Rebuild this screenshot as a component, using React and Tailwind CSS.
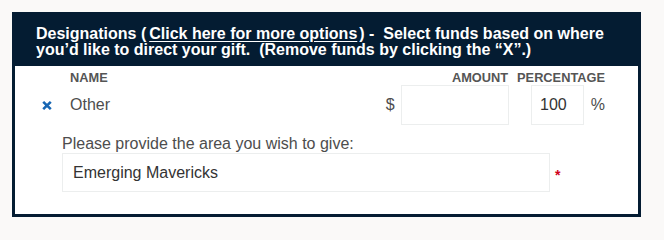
export default function App() {
  return (
    <div className="min-h-screen bg-[#faf9f8] pl-3 pt-3 font-['Liberation_Sans',Arial,sans-serif]">
      <div className="w-[629px] border-[3px] border-[#041c32] bg-white">
        {/* header bar */}
        <div className="bg-[#041c32] pb-[8px] pl-[21px] pt-[11px] text-[16px] font-bold leading-4 text-white">
          Designations (
          <a href="#" className="ml-[3px] mr-[2px] underline underline-offset-2">
            Click here for more options
          </a>
          ) -{"\u00a0"} Select funds based on where
          <br />
          you’d like to direct your gift.{"\u00a0"} (Remove funds by clicking the “X”.)
        </div>

        <div className="pb-[22px] pt-[5px]">
          {/* column labels */}
          <div className="flex items-center pl-[55px] pr-[33px] text-[12.8px] font-bold leading-[14px] text-[#555]">
            <div className="flex-1">NAME</div>
            <div className="w-[123px] pr-[2px] text-right">AMOUNT</div>
            <div className="ml-[7px]">PERCENTAGE</div>
          </div>

          {/* fund row */}
          <div className="flex h-[40px] items-center pl-[27px] pr-[33px] text-[16px] text-[#4d4d4d]">
            <div className="w-[28px]">
              <svg width="10" height="9" viewBox="0 0 10 9" className="block">
                <path d="M1.2 0.9 L8.8 8.1 M8.8 0.9 L1.2 8.1" stroke="#1766b3" strokeWidth="2.6" />
              </svg>
            </div>
            <div className="flex-1">Other</div>
            <div className="w-[15px]">$</div>
            <input
              className="h-[40px] w-[108px] border border-[#eceeee] px-2 outline-none"
              defaultValue=""
            />
            <input
              className="ml-[22px] h-[40px] w-[53px] border border-[#eceeee] pr-[16px] text-right text-[#333] outline-none"
              defaultValue="100"
            />
            <span className="ml-[7px]">%</span>
          </div>

          {/* other area */}
          <div className="mt-[10px] pl-[47px] text-[16px] leading-[18px] text-[#4d4d4d]">
            Please provide the area you wish to give:
          </div>
          <div className="flex items-center pl-[47px]">
            <input
              className="h-[39px] w-[488px] border border-[#eceeee] px-[10px] text-[16px] text-[#333] outline-none"
              defaultValue="Emerging Mavericks"
            />
            <span className="ml-[5px] mt-[4px] text-[14px] font-bold leading-none text-[#d0021b]">*</span>
          </div>
        </div>
      </div>
    </div>
  );
}
